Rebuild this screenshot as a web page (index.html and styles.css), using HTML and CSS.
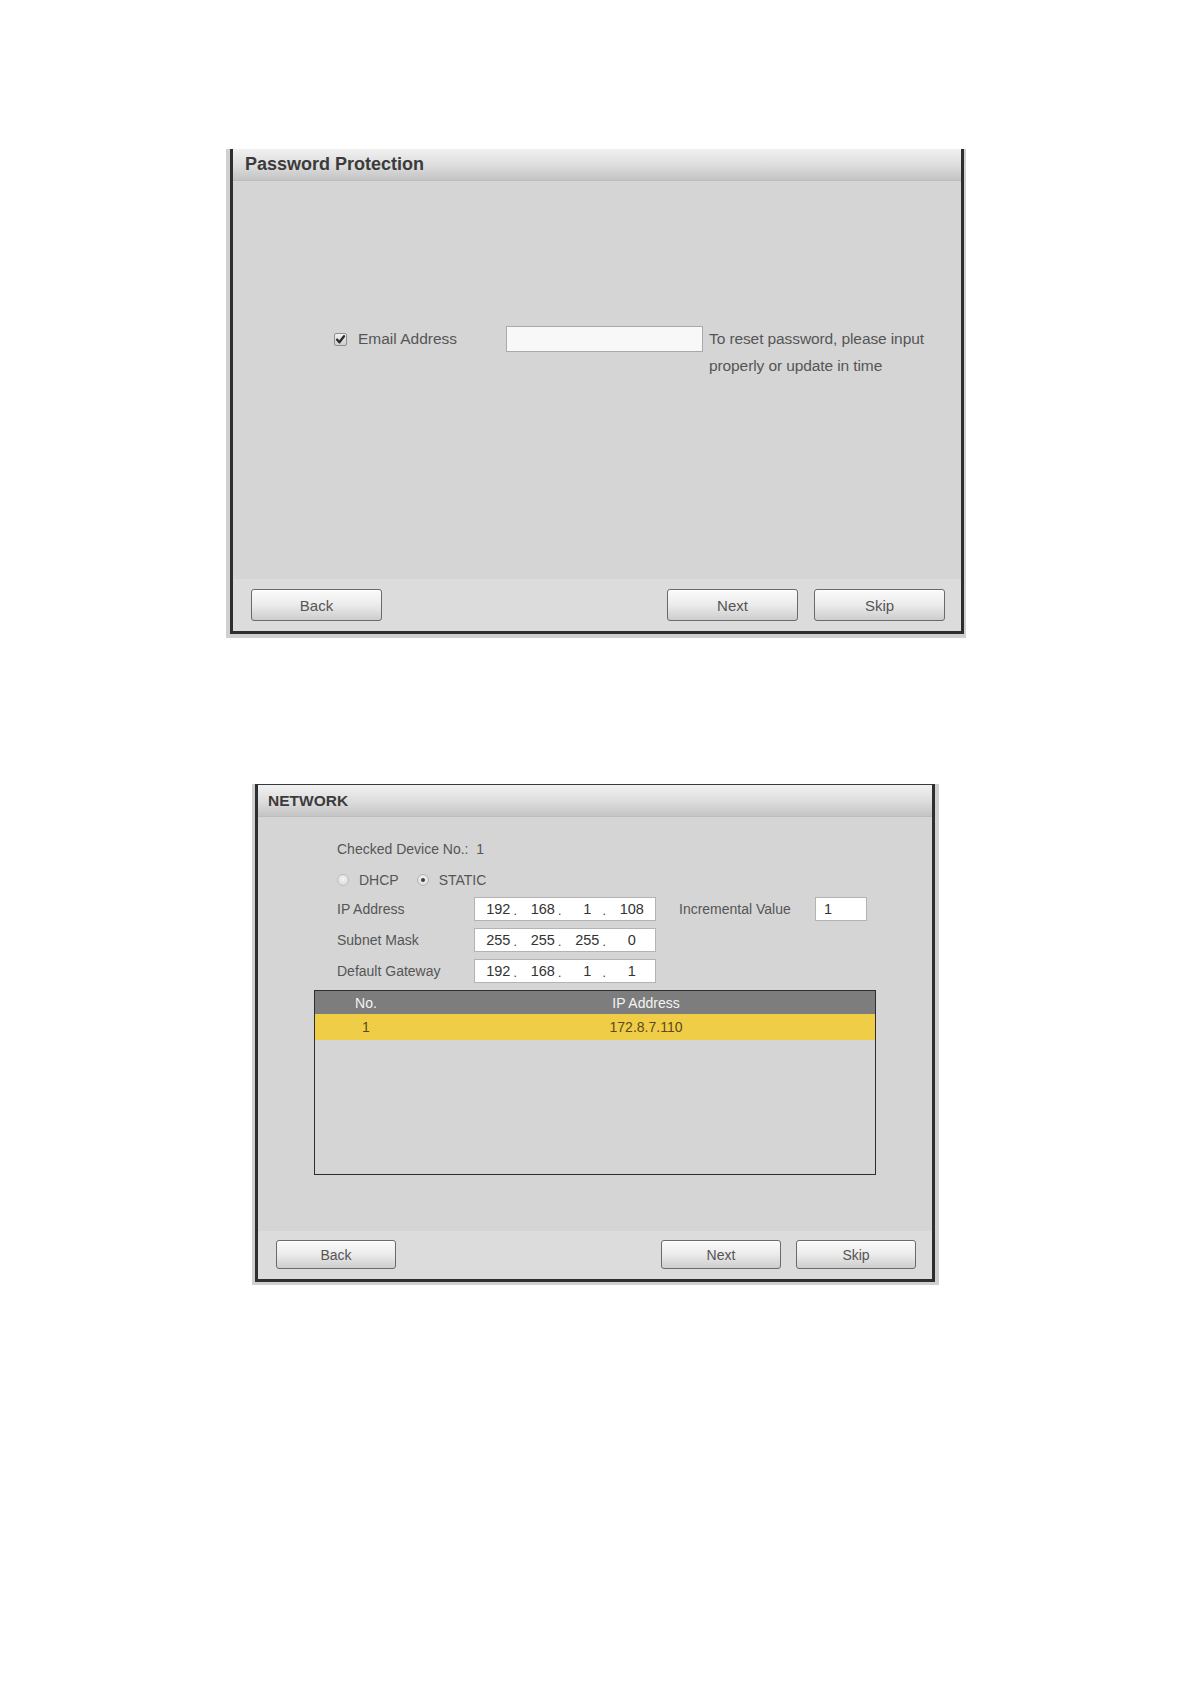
FILE: index.html
```html
<!DOCTYPE html>
<html lang="en">
<head>
<meta charset="utf-8">
<title>Setup Wizard</title>
<link rel="stylesheet" href="styles.css">
</head>
<body>
<div class="frame frame-pw">
  <div class="panel panel-pw">
    <div class="titlebar title-pw">Password Protection</div>
    <div class="pw-body">
      <div class="email-row">
        <span class="checkbox">
          <svg viewBox="0 0 13 13" width="13" height="13"><path d="M3 6.6 L5.4 9.3 L10 3.2" fill="none" stroke="#2b2b2b" stroke-width="2.3" stroke-linecap="round" stroke-linejoin="round"/></svg>
        </span>
        <span class="email-label">Email Address</span>
        <span class="text-input email-input"></span>
        <p class="help">To reset password, please input<br>properly or update in time</p>
      </div>
    </div>
    <div class="footer footer-pw">
      <button class="btn btn-pw btn-back">Back</button>
      <button class="btn btn-pw">Next</button>
      <button class="btn btn-pw">Skip</button>
    </div>
  </div>
</div>

<div class="frame frame-net">
  <div class="panel panel-net">
    <div class="titlebar title-net">NETWORK</div>
    <div class="net-body">
      <div class="form">
        <div class="checked">Checked Device No.:&nbsp; 1</div>
        <div class="mode-row">
          <span class="radio"></span>
          <span class="mode-label">DHCP</span>
          <span class="radio radio-on"><span class="dot"></span></span>
          <span class="mode-label">STATIC</span>
        </div>
        <div class="ip-rows">
          <div class="ip-row">
            <span class="ip-label">IP Address</span>
            <span class="ip-box">
              <span class="oct">192</span><span class="sep">.</span>
              <span class="oct">168</span><span class="sep">.</span>
              <span class="oct">1</span><span class="sep">.</span>
              <span class="oct">108</span>
            </span>
            <span class="inc-label">Incremental Value</span>
            <span class="inc-box">1</span>
          </div>
          <div class="ip-row">
            <span class="ip-label">Subnet Mask</span>
            <span class="ip-box">
              <span class="oct">255</span><span class="sep">.</span>
              <span class="oct">255</span><span class="sep">.</span>
              <span class="oct">255</span><span class="sep">.</span>
              <span class="oct">0</span>
            </span>
          </div>
          <div class="ip-row">
            <span class="ip-label">Default Gateway</span>
            <span class="ip-box">
              <span class="oct">192</span><span class="sep">.</span>
              <span class="oct">168</span><span class="sep">.</span>
              <span class="oct">1</span><span class="sep">.</span>
              <span class="oct">1</span>
            </span>
          </div>
        </div>
      </div>
      <div class="table">
        <div class="thead">
          <span class="col-no">No.</span>
          <span class="col-ip">IP Address</span>
        </div>
        <div class="trow selected">
          <span class="col-no">1</span>
          <span class="col-ip">172.8.7.110</span>
        </div>
      </div>
    </div>
    <div class="footer footer-net">
      <button class="btn btn-net btn-back">Back</button>
      <button class="btn btn-net">Next</button>
      <button class="btn btn-net">Skip</button>
    </div>
  </div>
</div>
</body>
</html>
```

FILE: styles.css
```css
html, body {
  margin: 0;
  padding: 0;
  background: #ffffff;
}

body {
  font-family: "Liberation Sans", Arial, sans-serif;
  color: #555555;
}

/* outer light strip around each dialog */
.frame {
  background: #d0d0d0;
}

.frame-pw {
  margin: 149px 0 0 226px;
  width: 734px;
  padding: 0 2px 4px 4px;
}

.frame-net {
  margin: 146px 0 0 252px;
  width: 680px;
  padding: 0 4px 3px 3px;
}

.panel {
  box-sizing: border-box;
  width: 100%;
  background: #d5d5d5;
  border: 3px solid #2f2f2f;
  border-top: 0;
}

.panel-net {
  border-top: 1px solid #3a3a3a;
}

.titlebar {
  box-sizing: border-box;
  display: flex;
  align-items: center;
  font-weight: bold;
  color: #3b3b3b;
  background: linear-gradient(#f1f1f1 0%, #dcdcdc 55%, #c4c4c4 100%);
  border-bottom: 1px solid #bcbcbc;
}

.title-pw {
  height: 32px;
  padding-left: 12px;
  font-size: 18px;
}

.title-net {
  height: 32px;
  padding-left: 10px;
  font-size: 15.5px;
}

/* ---------- Password protection body ---------- */
.pw-body {
  box-sizing: border-box;
  height: 398px;
  padding-top: 145px;
}

.email-row {
  display: flex;
  align-items: flex-start;
  padding-left: 101px;
  font-size: 15.5px;
  color: #555555;
}

.checkbox {
  box-sizing: border-box;
  width: 13px;
  height: 13px;
  margin-top: 7px;
  border: 1px solid #8e8e8e;
  border-radius: 2px;
  background: linear-gradient(#f2f2f2, #cfcfcf);
  display: flex;
  align-items: center;
  justify-content: center;
}

.checkbox svg {
  display: block;
  margin: -1px;
}

.email-label {
  width: 148px;
  margin-left: 11px;
  line-height: 26px;
}

.text-input {
  box-sizing: border-box;
  border: 1px solid #a9a9a9;
  background: #f8f8f8;
}

.email-input {
  width: 197px;
  height: 26px;
}

.help {
  margin: -1px 0 0 6px;
  line-height: 27px;
  letter-spacing: -0.1px;
}

/* ---------- footers and buttons ---------- */
.footer {
  box-sizing: border-box;
  display: flex;
  align-items: flex-start;
  background: #dcdcdc;
}

.footer-pw {
  height: 52px;
  padding: 10px 16px 0 18px;
  gap: 16px;
}

.footer-net {
  height: 48px;
  padding: 9px 16px 0 18px;
  gap: 15px;
}

.btn {
  box-sizing: border-box;
  padding: 0;
  border: 1px solid #6a6a6a;
  border-radius: 3px;
  background: linear-gradient(#fbfbfb 0%, #ebebeb 50%, #cdcdcd 100%);
  color: #555555;
  font-family: "Liberation Sans", Arial, sans-serif;
  box-shadow: inset 0 1px 0 #ffffff;
}

.btn-back {
  margin-right: auto;
}

.btn-pw {
  width: 131px;
  height: 32px;
  font-size: 15px;
}

.btn-net {
  width: 120px;
  height: 29px;
  font-size: 14px;
}

/* ---------- Network body ---------- */
.net-body {
  box-sizing: border-box;
  height: 414px;
  padding: 22px 0 0 56px;
  font-size: 14px;
  color: #555555;
}

.form {
  padding-left: 23px;
}

.checked {
  height: 20px;
  line-height: 20px;
}

.mode-row {
  display: flex;
  align-items: center;
  height: 20px;
  margin-top: 11px;
}

.radio {
  box-sizing: border-box;
  width: 12px;
  height: 12px;
  border-radius: 50%;
  border: 1px solid #bdbdbd;
  background: radial-gradient(circle at 50% 40%, #f4f4f4, #d6d6d6);
  display: flex;
  align-items: center;
  justify-content: center;
}

.radio-on {
  margin-left: 18px;
  border-color: #b4b4b4;
}

.dot {
  width: 4px;
  height: 4px;
  border-radius: 50%;
  background: #3f3f3f;
}

.mode-label {
  margin-left: 10px;
}

.ip-rows {
  display: flex;
  flex-direction: column;
  gap: 7px;
  margin-top: 7px;
}

.ip-row {
  display: flex;
  align-items: center;
  height: 24px;
}

.ip-label {
  width: 137px;
}

.ip-box {
  box-sizing: border-box;
  display: flex;
  align-items: center;
  width: 182px;
  height: 24px;
  padding: 0 4px;
  border: 1px solid #b3b3b3;
  background: #ffffff;
  color: #333333;
  font-size: 14.5px;
}

.oct {
  flex: 1;
  text-align: center;
}

.sep {
  width: 6px;
  text-align: left;
  font-size: 12px;
  margin-top: 4px;
  margin-left: -4px;
  margin-right: 4px;
}

.inc-label {
  margin-left: 23px;
  width: 136px;
}

.inc-box {
  box-sizing: border-box;
  width: 52px;
  height: 24px;
  line-height: 22px;
  padding-left: 8px;
  border: 1px solid #b3b3b3;
  background: #ffffff;
  color: #333333;
  font-size: 14.5px;
}

.table {
  box-sizing: border-box;
  width: 562px;
  height: 185px;
  margin-top: 7px;
  border: 1px solid #2e2e2e;
  background: #d5d5d5;
}

.thead,
.trow {
  display: flex;
  align-items: center;
}

.thead {
  height: 23px;
  background: #7d7d7d;
  color: #f4f4f4;
}

.trow {
  height: 26px;
}

.selected {
  background: #f0cd47;
  color: #5b4a1c;
}

.col-no {
  width: 102px;
  text-align: center;
}

.col-ip {
  flex: 1;
  text-align: center;
}
```
